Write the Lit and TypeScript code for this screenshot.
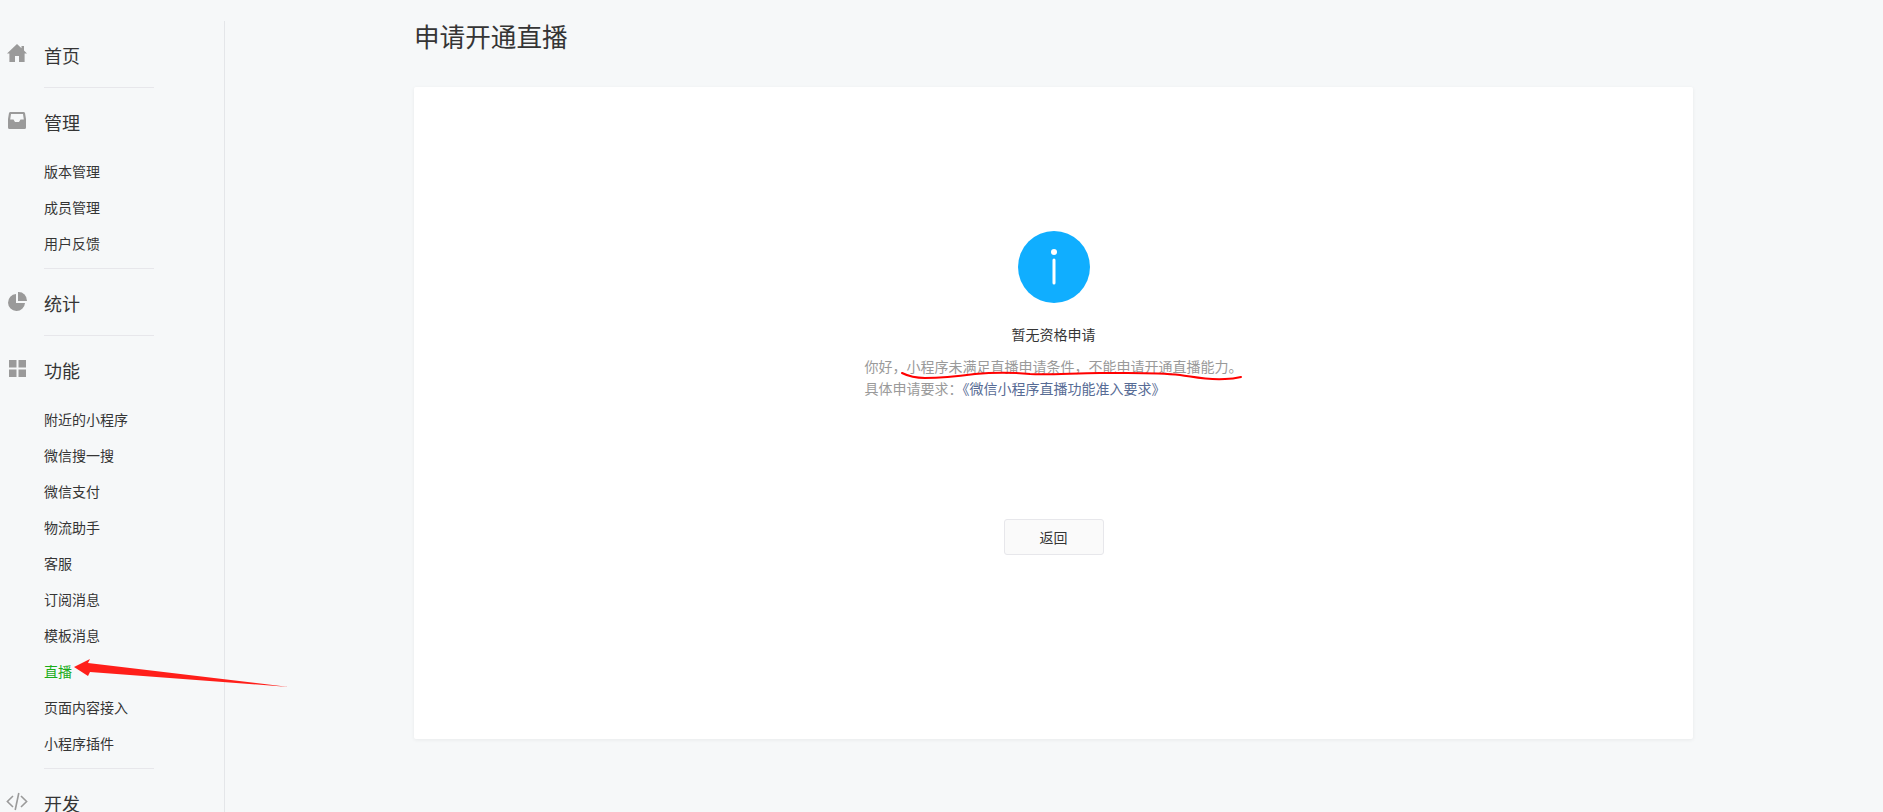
import { LitElement, html, css, svg } from 'lit';
import { customElement } from 'lit/decorators.js';

type NavSection = {
  title: string
  icon: ReturnType<typeof svg>
  items?: string[]
}

const sections: NavSection[] = [
  {
    title: '首页',
    icon: svg`<path d="M11 1 L15.5 5.3 V3 H18 V7.6 L21 10.6 H18.6 V19 H13 V13 H9 V19 H3.4 V10.6 H1 Z"/>`,
  },
  {
    title: '管理',
    icon: svg`<path fill-rule="evenodd" d="M4.5 2 H17.5 Q18.6 2 19 3 L20 9 V17.5 Q20 19 18.5 19 H3.5 Q2 19 2 17.5 V9 L3 3 Q3.4 2 4.5 2 Z M5 4 L4.2 9.5 H7.5 L9 12 H13 L14.5 9.5 H17.8 L17 4 Z"/>`,
    items: ['版本管理', '成员管理', '用户反馈'],
  },
  {
    title: '统计',
    icon: svg`<path d="M10 3 A8.5 8.5 0 1 0 19 12 H10 Z"/><path d="M12 1 A8.5 8.5 0 0 1 21 10 H12 Z"/>`,
  },
  {
    title: '功能',
    icon: svg`<rect x="3" y="2" width="7.5" height="7.5"/><rect x="12.5" y="2" width="7.5" height="7.5"/><rect x="3" y="11.5" width="7.5" height="7.5"/><rect x="12.5" y="11.5" width="7.5" height="7.5"/>`,
    items: ['附近的小程序', '微信搜一搜', '微信支付', '物流助手', '客服', '订阅消息', '模板消息', '直播', '页面内容接入', '小程序插件'],
  },
  {
    title: '开发',
    icon: svg`<g fill="none" stroke="#9a9a9a" stroke-width="1.6"><path d="M7 5 L1.4 10.5 L7 16"/><path d="M15 5 L20.6 10.5 L15 16"/><path d="M12.8 2 L9.2 19"/></g>`,
  },
]

@customElement('app-root')
export class AppRoot extends LitElement {

  static styles = css`
    :host {
      display: block;
      position: relative;
      height: 812px;
      overflow: hidden;
      background: #f6f8f9;
      color: #353535;
      font-family: "Noto Sans CJK SC", "Liberation Sans", sans-serif;
      font-size: 14px;
    }

    * {
      box-sizing: border-box;
    }

    .page {
      display: flex;
      align-items: flex-start;
    }

    .sidebar {
      flex: none;
      width: 225px;
      height: 791px;
      margin-top: 21px;
      padding-top: 16px;
      border-right: 1px solid #e4e6e9;
    }

    .section {
      margin-left: 44px;
      width: 110px;
      padding-bottom: 14px;
      margin-bottom: 16px;
      border-bottom: 1px solid #e7e7eb;
    }

    .section.has-items {
      padding-bottom: 7px;
    }

    .head {
      display: flex;
      align-items: center;
      height: 36px;
      margin-left: -38px;
      width: 148px;
      gap: 16px;
      font-size: 18px;
      line-height: 36px;
      white-space: nowrap;
    }

    .head svg {
      flex: none;
      width: 22px;
      height: 22px;
      fill: #9a9a9a;
      margin-top: -2px;
    }

    .items {
      margin: 13px 0 0;
      padding: 0;
      list-style: none;
    }

    .items li {
      height: 36px;
      line-height: 36px;
      white-space: nowrap;
    }

    .items li.active {
      color: #1aad19;
    }

    .main {
      flex: 1;
      padding: 0 190px 0 189px;
    }

    h1 {
      margin: 0;
      height: 87px;
      padding-top: 16px;
      font-size: 25.6px;
      font-weight: 400;
      line-height: 40px;
    }

    .card {
      display: flex;
      flex-direction: column;
      align-items: center;
      height: 652px;
      padding-top: 144px;
      background: #fff;
      border-radius: 2px;
      box-shadow: 0 1px 4px rgba(0, 0, 0, 0.06);
    }

    .info {
      display: block;
      width: 72px;
      height: 72px;
    }

    .status {
      margin-top: 20px;
      line-height: 22px;
    }

    .desc {
      margin-top: 10px;
      color: #9a9a9a;
      line-height: 22px;
      white-space: nowrap;
    }

    .desc a {
      color: #576b95;
      text-decoration: none;
    }

    .back {
      width: 100px;
      height: 36px;
      margin-top: 120px;
      background: #fafafa;
      border: 1px solid #e7e7eb;
      border-radius: 3px;
      color: #353535;
      font: inherit;
      line-height: 34px;
      padding: 0;
    }

    .marks {
      position: absolute;
      left: 0;
      top: 0;
      pointer-events: none;
    }
  `

  render() {
    return html`
      <div class="page">
        <nav class="sidebar">
          ${sections.map((s) => html`
            <div class="section ${s.items ? 'has-items' : ''}">
              <div class="head">
                <svg viewBox="0 0 22 22">${s.icon}</svg>
                <span>${s.title}</span>
              </div>
              ${s.items ? html`
                <ul class="items">
                  ${s.items.map((item) => html`<li class=${item === '直播' ? 'active' : ''}>${item}</li>`)}
                </ul>
              ` : ''}
            </div>
          `)}
        </nav>
        <main class="main">
          <h1>申请开通直播</h1>
          <section class="card">
            <svg class="info" viewBox="0 0 72 72">
              <circle cx="36" cy="36" r="36" fill="#10aeff"/>
              <circle cx="36" cy="21" r="3" fill="#fff"/>
              <path d="M36 29 V52" stroke="#fff" stroke-width="3" stroke-linecap="round"/>
            </svg>
            <div class="status">暂无资格申请</div>
            <div class="desc">
              <div>你好，小程序未满足直播申请条件，不能申请开通直播能力。</div>
              <div>具体申请要求：<a href="#">《微信小程序直播功能准入要求》</a></div>
            </div>
            <button class="back">返回</button>
          </section>
        </main>
      </div>
      <!-- red annotations drawn on top of the screenshot -->
      <svg class="marks" width="1883" height="812" viewBox="0 0 1883 812">
        <path d="M74 667 L90 659 L88 663 L289 687 L90 672 L88 676 Z" fill="#ff1f1a"/>
        <path d="M902 373 C908 376 916 378 925 378 C945 378 960 376 975 374 C995 372 1010 372 1030 374 C1050 375 1075 373 1100 373 C1130 373 1155 372 1180 375 C1195 377 1205 380 1225 379 C1232 379 1237 378 1241 377" fill="none" stroke="#f00" stroke-width="2" stroke-linecap="round"/>
      </svg>
    `
  }
}
